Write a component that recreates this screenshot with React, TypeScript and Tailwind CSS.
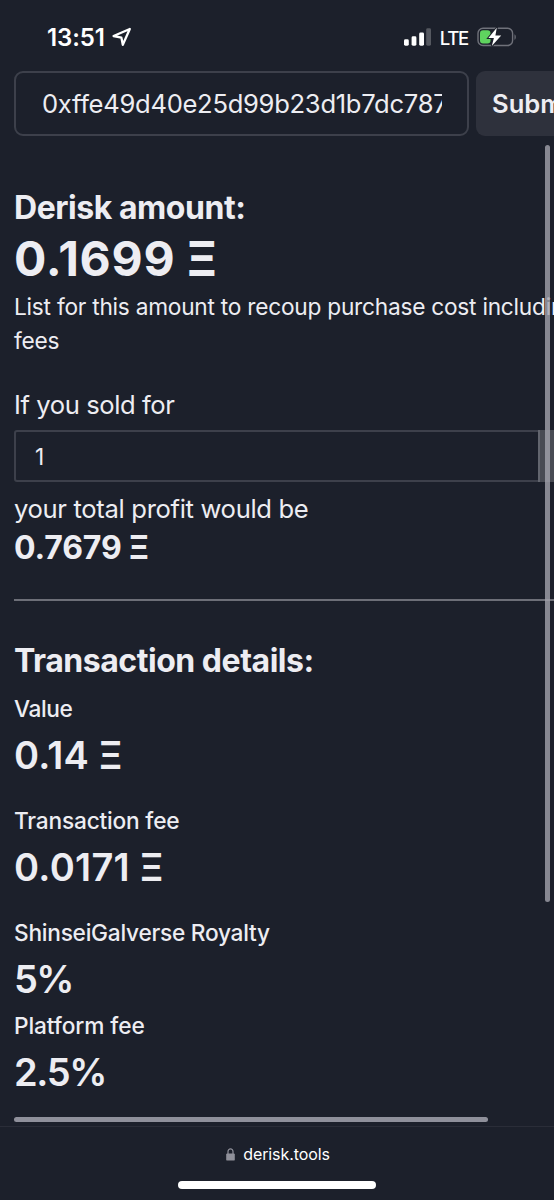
const details = [
  { label: "Value", value: "0.14", unit: "Ξ", gap: "mt-[13px]", labelClass: "tracking-[-0.4px]", valueClass: "tracking-[0.2px]" },
  { label: "Transaction fee", value: "0.0171", unit: "Ξ", gap: "mt-7", labelClass: "tracking-[-0.2px]", valueClass: "tracking-[0.3px]" },
  { label: "ShinseiGalverse Royalty", value: "5%", unit: "", gap: "mt-7", labelClass: "tracking-[-0.26px]", valueClass: "tracking-[-1.6px]" },
  { label: "Platform fee", value: "2.5%", unit: "", gap: "mt-[9px]", labelClass: "tracking-[-0.1px]", valueClass: "tracking-[-1.4px]" },
];

function Eth() {
  return <span className="inline-block origin-left scale-x-90">Ξ</span>;
}

function StatusBar() {
  return (
    <div className="flex h-[71px] shrink-0 items-start justify-between pt-[22px] pr-[37px] pl-[47px] text-white">
      <div className="flex h-[30px] items-center gap-[7px]">
        <span className="pt-px text-[24px] leading-[30px] font-semibold tracking-[-0.1px]">13:51</span>
        <svg className="h-5 w-5" viewBox="0 0 20 20" fill="none" stroke="currentColor" strokeWidth="2.3" strokeLinejoin="round">
          <path d="M17.8 2 L1.6 9 L9.4 10.6 L10.8 17.8 Z" />
        </svg>
      </div>
      <div className="flex h-[30px] items-center">
        <svg className="h-[18px] w-7" viewBox="0 0 28 18" fill="currentColor">
          <rect x="1" y="11.3" width="4.8" height="6.4" rx="1.4" />
          <rect x="8.6" y="8.3" width="4.8" height="9.4" rx="1.4" />
          <rect x="16.2" y="4.6" width="4.8" height="13.1" rx="1.4" />
          <rect x="23.2" y="0.3" width="4.8" height="17.4" rx="1.4" opacity="0.25" />
        </svg>
        <span className="ml-[9px] pt-px text-[18.6px] leading-[30px] font-medium tracking-[-1.3px]">LTE</span>
        <svg className="ml-[9px] h-5 w-10" viewBox="0 0 40 20" fill="none">
          <rect x="1" y="1.2" width="34.6" height="17.3" rx="5" stroke="#6f717a" strokeWidth="1.4" />
          <path d="M37.5 7.2 C39.2 8 39.2 12 37.5 12.8 Z" fill="#6f717a" />
          <rect x="3" y="3.2" width="10.5" height="13.3" rx="3" fill="#5fd35f" />
          <path d="M19.8 0.8 L11.4 11 H16.9 L14.8 19 L24.2 8.4 H18.4 Z" fill="#fff" stroke="#1c202b" strokeWidth="2" paintOrder="stroke" />
        </svg>
      </div>
    </div>
  );
}

function BrowserBar() {
  return (
    <div className="flex h-[74px] shrink-0 flex-col items-center border-t border-[#2a2d38] bg-[#1c202b]">
      <div className="mt-[15px] flex h-6 items-center gap-2 pl-0.5 text-white">
        <svg className="h-[13px] w-[9px]" viewBox="0 0 9 13" fill="none">
          <path d="M2 6 V3.4 a2.5 2.5 0 0 1 5 0 V6" stroke="#8f909a" strokeWidth="1.2" />
          <rect x="0.2" y="5.4" width="8.6" height="7.2" rx="1.2" fill="#8f909a" />
        </svg>
        <span className="text-[16px] leading-6 tracking-[-0.1px]">derisk.tools</span>
      </div>
      <div className="mt-[15px] h-2 w-[198px] rounded-full bg-white" />
    </div>
  );
}

export default function App() {
  return (
    <div className="relative flex h-[1200px] w-[554px] flex-col overflow-hidden bg-[#1c202b] font-['Inter',sans-serif] whitespace-nowrap text-[#ededf2]">
      <StatusBar />
      <main className="flex-1 pl-3.5">
        <div className="flex h-[65px] gap-[7px]">
          <div className="flex w-[455px] shrink-0 items-center rounded-[9px] border-2 border-[#3d404b] pr-[25px] pl-[26px]">
            <span className="overflow-hidden pt-px text-[25.6px] leading-[34px] tracking-[-0.3px]">0xffe49d40e25d99b23d1b7dc787b</span>
          </div>
          <button className="w-[120px] shrink-0 rounded-[9px] bg-[#2e313c] pt-0.5 pl-4 text-left text-[25.6px] font-semibold">
            Submit
          </button>
        </div>

        <h2 className="mt-[52px] text-[32px] leading-[39px] font-bold tracking-[-0.46px]">Derisk amount:</h2>
        <p className="mt-1 text-[48px] leading-[55px] font-bold tracking-[0.75px]">
          0.1699 <Eth />
        </p>
        <p className="mt-1 text-[22.7px] leading-[34px] tracking-[-0.24px]">
          List for this amount to recoup purchase cost including
          <br />
          fees
        </p>

        <p className="mt-[30px] text-[25.6px] leading-[34px] tracking-[-0.42px]">If you sold for</p>
        <div className="mt-2 flex h-[52px] w-[570px] rounded-[3px] border-2 border-[#3d404b]">
          <span className="flex-1 pl-[19px] text-[22.7px] leading-[49px]">1</span>
          <span className="-my-0.5 w-[44px] border-l-2 border-[#62656e] bg-[#484b54]" />
        </div>
        <p className="mt-[9px] text-[25.6px] leading-[35px] tracking-[-0.33px]">your total profit would be</p>
        <p className="mt-[3px] text-[32px] leading-[38px] font-bold tracking-[-0.15px]">
          0.7679 <Eth />
        </p>

        <hr className="mt-[32px] border-t-2 border-[#6d6f78]" />

        <h2 className="mt-10 text-[32px] leading-10 font-bold tracking-[-0.47px]">Transaction details:</h2>
        {details.map((item) => (
          <div key={item.label} className={item.gap}>
            <p className={`text-[22.7px] leading-[30px] font-medium ${item.labelClass}`}>{item.label}</p>
            <p className={`mt-2 text-[38px] leading-[46px] font-semibold ${item.valueClass}`}>
              {item.value} {item.unit && <Eth />}
            </p>
          </div>
        ))}
      </main>
      <BrowserBar />

      {/* overlay scroll indicators */}
      <div className="absolute top-[145px] right-[4px] h-[757px] w-[5px] rounded-full bg-[#a2a3ad]/80" />
      <div className="absolute top-[1117px] left-[14px] h-[5px] w-[474px] rounded-full bg-[#8f909b]" />
    </div>
  );
}
